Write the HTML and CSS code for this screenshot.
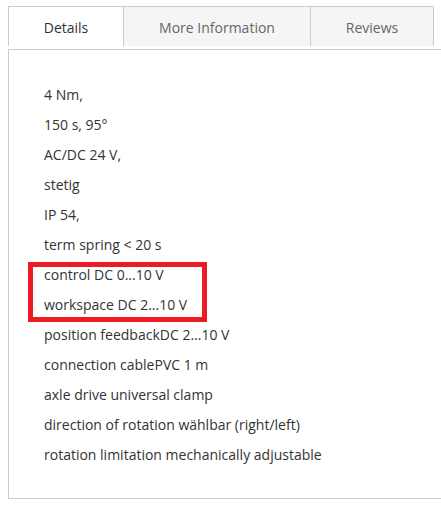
FILE: index.html
```html
<!DOCTYPE html>
<html>
<head>
<meta charset="utf-8">
<link rel="stylesheet" href="styles.css">
</head>
<body>
<div class="product-tabs">
  <div class="tab-bar">
    <div class="tab tab-active">Details</div>
    <div class="tab">More Information</div>
    <div class="tab">Reviews</div>
  </div>
  <div class="tab-content">
    <div class="line">4 Nm,</div>
    <div class="line">150 s, 95°</div>
    <div class="line">AC/DC 24 V,</div>
    <div class="line">stetig</div>
    <div class="line">IP 54,</div>
    <div class="line">term spring &lt; 20 s</div>
    <div class="highlight">
      <div class="line">control DC 0...10 V</div>
      <div class="line">workspace DC 2...10 V</div>
    </div>
    <div class="line">position feedbackDC 2...10 V</div>
    <div class="line">connection cablePVC 1 m</div>
    <div class="line">axle drive universal clamp</div>
    <div class="line">direction of rotation wählbar (right/left)</div>
    <div class="line">rotation limitation mechanically adjustable</div>
  </div>
</div>
</body>
</html>
```

FILE: styles.css
```css
html, body {
  margin: 0;
  background: #fff;
  overflow: hidden;
}
body {
  padding: 6px 0 0 8px;
  font-family: "Open Sans", "Liberation Sans", sans-serif;
  font-size: 14px;
  color: #333;
}
.product-tabs {
  width: 434px;
}
.tab-bar {
  display: flex;
  height: 40px;
}
.tab {
  box-sizing: border-box;
  height: 40px;
  padding-top: 2px;
  line-height: 37px;
  text-align: center;
  background: #f5f5f5;
  border-top: 1px solid #ccc;
  border-right: 1px solid #ccc;
  color: #666;
  font-size: 14px;
}
.tab:nth-child(1) { width: 116px; border-left: 1px solid #ccc; }
.tab:nth-child(2) { width: 187px; }
.tab:nth-child(3) { width: 123px; }
.tab-active {
  background: #fff;
  color: #333;
}
.tab-content {
  margin-top: 3px;
  border: 1px solid #ccc;
  padding: 30px 0 28px 35px;
}
.line {
  line-height: 30px;
  white-space: nowrap;
}
.highlight {
  position: relative;
}
.highlight::after {
  content: "";
  position: absolute;
  left: -16px;
  top: 2px;
  width: 169px;
  height: 50px;
  border: 5px solid #ed1c24;
}
```
